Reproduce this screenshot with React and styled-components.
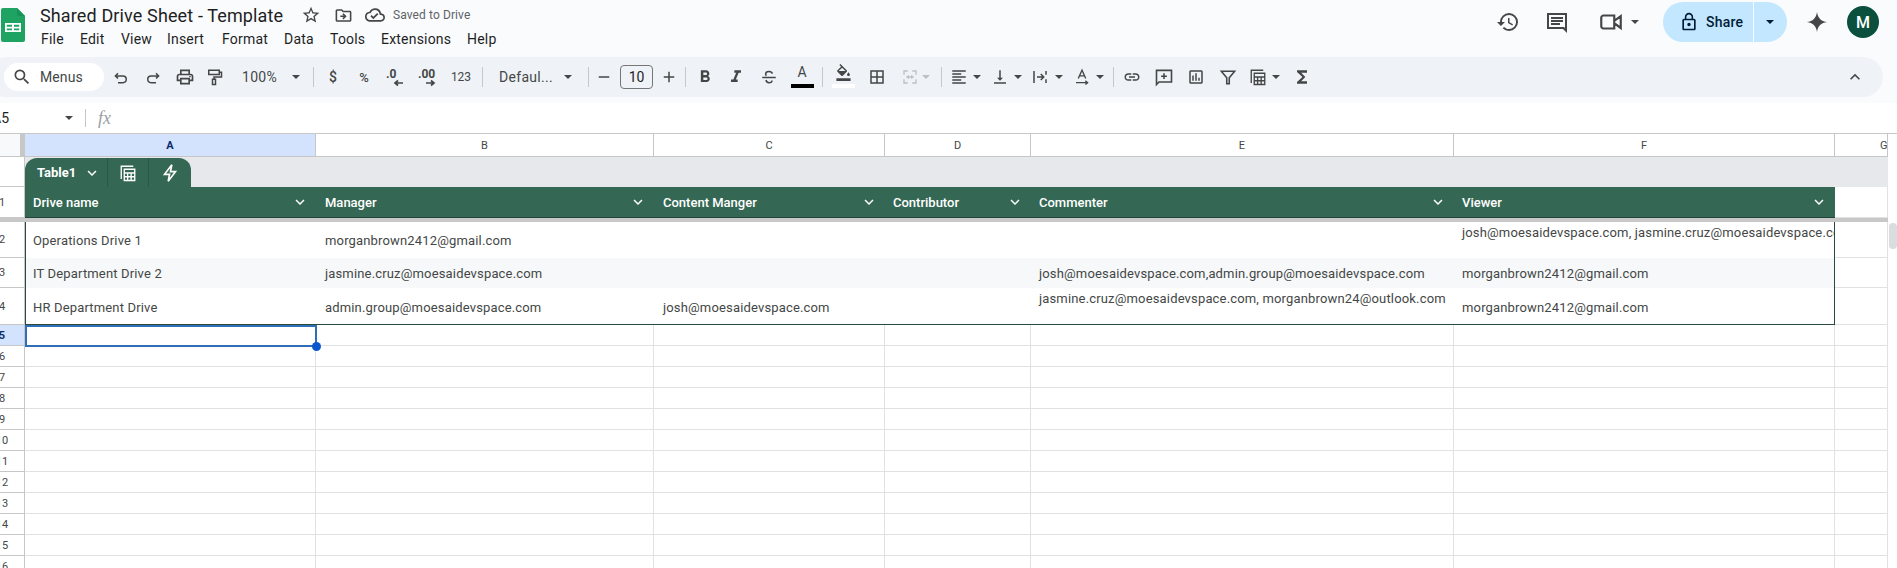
import React from "react";
import styled, { createGlobalStyle } from "styled-components";
import {
  MdOutlineStarBorder, MdOutlineDriveFileMove, MdOutlineCloudDone, MdHistory, MdLockOutline,
  MdSearch, MdOutlinePrint, MdFormatBold, MdFormatItalic,
  MdOutlineFormatColorFill, MdBorderAll, MdFormatAlignLeft,
  MdVerticalAlignBottom, MdLink, MdOutlineAssessment, MdFunctions,
  MdKeyboardArrowUp, MdKeyboardArrowDown, MdAdd, MdRemove,
} from "react-icons/md";

const ICON = "#444746";
const GREEN = "#356854";
const FONT = `Roboto, "Liberation Sans", sans-serif`;

const Global = createGlobalStyle`
  html, body { margin: 0; padding: 0; height: 568px; overflow: hidden; background: #f9fbfd; }
  body { font-family: ${FONT}; color: #1f1f1f; }
  #root { width: 1897px; height: 568px; overflow: hidden; }
  * { box-sizing: border-box; }
`;

const Page = styled.div`display: flex; flex-direction: column; width: 1897px; height: 568px; overflow: hidden;`;
const TopBar = styled.header`display: flex; align-items: flex-start; height: 57px; flex: none; padding-right: 18px;`;
const LogoWrap = styled.div`width: 40px; padding: 8px 0 0 1px; flex: none; display: flex;`;
const TitleCol = styled.div`display: flex; flex-direction: column;`;
const TitleRow = styled.div`display: flex; align-items: center; height: 26px; margin-top: 2px;`;
const Title = styled.div`font-size: 18px; width: 255px; color: #1f1f1f; white-space: nowrap; letter-spacing: 0.13px;`;
const Slot = styled.div`
  width: ${p => p.$w}px; flex: none; display: flex; align-items: center; justify-content: center;
  color: ${p => p.$c || ICON}; font-size: ${p => p.$s || 20}px;
`;
const Saved = styled.span`font-size: 12px; color: #5f6368; margin-left: 2px; white-space: nowrap; letter-spacing: 0.1px;`;
const MenuRow = styled.nav`display: flex; margin-top: 1px; padding-left: 1px;`;
const MenuItem = styled.span`font-size: 14px; line-height: 20px; width: ${p => p.$w}px; color: #1f1f1f; letter-spacing: 0.2px;`;
const RightTools = styled.div`margin-left: auto; display: flex; align-items: center; height: 44px;`;
const VideoBtn = styled.div`width: 64px; margin-right: 13px; padding-left: 12px; display: flex; align-items: center; gap: 7px; color: ${ICON};`;
const ShareLeft = styled.div`
  width: 90px; height: 40px; border-radius: 20px 0 0 20px; background: #c2e7ff; display: flex; align-items: center;
  padding-left: 16px; gap: 7px; color: #001d35; font-size: 14px; font-weight: 500; letter-spacing: 0.2px;
`;
const ShareRight = styled.div`
  width: 33px; height: 40px; margin-left: 1px; border-radius: 0 20px 20px 0; background: #c2e7ff;
  display: flex; align-items: center; padding-left: 12px;
`;
const Avatar = styled.div`
  width: 32px; height: 32px; border-radius: 50%; background: #0b4f3f; color: #fff; display: flex; align-items: center;
  justify-content: center; font-size: 16px; font-weight: 500;
`;
const Caret = styled.i`
  display: block; flex: none; width: 0; height: 0; border-left: 4px solid transparent; border-right: 4px solid transparent;
  border-top: 4px solid ${p => p.$c || ICON};
`;

const Toolbar = styled.div`
  display: flex; align-items: center; height: 40px; width: 1897px; margin-left: -14px; background: #eff3f8;
  border-radius: 20px; padding-left: 18px; flex: none;
`;
const SearchPill = styled.div`
  width: 100px; height: 28px; background: #fff; border-radius: 14px; display: flex; align-items: center; padding-left: 8px;
  gap: 8px; color: #444746; font-size: 14px; letter-spacing: 0.1px;
`;
const Tool = styled.div`
  flex: none; width: ${p => p.$w}px; height: 28px; display: flex; align-items: center; justify-content: center;
  color: ${ICON}; font-size: ${p => p.$s || 18}px;
`;
const CaretTool = styled.div`
  flex: none; width: ${p => p.$w}px; height: 28px; display: flex; align-items: center; gap: ${p => p.$g || 5}px;
  padding-left: ${p => p.$p}px; color: ${ICON}; font-size: 18px;
`;
const TextTool = styled.span`font-size: ${p => p.$s || 14}px; color: ${ICON}; ${p => p.$b ? "font-weight:500;" : ""}`;
const DropText = styled.span`font-size: 14px; color: ${ICON}; width: ${p => p.$w}px; letter-spacing: 0.3px; white-space: nowrap;`;
const Sep = styled.div`flex: none; width: 1px; height: 20px; background: #c7c7c7; margin-left: ${p => p.$l}px; margin-right: ${p => p.$r || 0}px;`;
const SizeBox = styled.div`
  flex: none; width: 33px; height: 24px; margin-left: 1px; border: 1px solid #747775; border-radius: 4px; display: flex; align-items: center;
  justify-content: center; font-size: 14px; color: #1f1f1f;
`;
const ColorTool = styled.div`flex: none; width: ${p => p.$w}px; height: 28px; display: flex; flex-direction: column; align-items: center; justify-content: flex-start; color: ${ICON};`;
const ColorGlyph = styled.div`height: 16px; margin-top: 1px; display: flex; align-items: center; justify-content: center; font-size: ${p => p.$s}px; line-height: 16px;`;
const Swatch = styled.div`width: 23px; height: 4px; margin-top: 4px; background: ${p => p.$c};`;
const Collapse = styled.div`margin-left: auto; margin-right: 12px; width: 32px; display: flex; justify-content: center; font-size: 20px; color: ${ICON};`;

const FormulaRow = styled.div`display: flex; align-items: center; height: 30px; margin-top: 6px; background: #fff; flex: none;`;
const NameBox = styled.div`width: 85px; display: flex; align-items: center; font-size: 14px; color: #1f1f1f; overflow: hidden;`;
const NameText = styled.span`margin-left: -8px; width: 73px;`;
const VLine = styled.div`width: 1px; height: 18px; background: #c7c7c7;`;
const Fx = styled.span`margin-left: 12px; font: italic 18px "Liberation Serif", serif; color: #9aa0a6;`;

const Sheet = styled.div`
  display: grid; flex: none; background: #fff; border-top: 1px solid #c7c7c7;
  grid-template-columns: 25px 291px 338px 231px 146px 423px 381px 53px 9px;
  grid-template-rows: 23px 30px 31px 4px 36px 30px 37px repeat(12, 21px);
`;
const Corner = styled.div`background: #f8f9fa; border-right: 5px solid #c7c7c7; border-bottom: 1px solid #c7c7c7;`;
const ColHead = styled.div`
  display: flex; align-items: center; justify-content: ${p => p.$clip ? "flex-start" : "center"}; overflow: hidden;
  padding-left: ${p => p.$clip ? 45 : 0}px;
  font-size: 11px; border-right: 1px solid #c7c7c7; border-bottom: 1px solid #c7c7c7;
  background: ${p => p.$on ? "#d3e3fd" : "#fff"}; color: ${p => p.$on ? "#0b2e6b" : "#444746"};
  font-weight: ${p => p.$on ? 700 : 400};
`;
const RowHead = styled.div`
  border-bottom: 1px solid #c7c7c7; border-right: 1px solid #c7c7c7; overflow: hidden; display: flex; align-items: center;
  font-size: 11px; background: ${p => p.$on ? "#d3e3fd" : "#fff"}; color: ${p => p.$on ? "#0b2e6b" : "#444746"};
  font-weight: ${p => p.$on ? 700 : 400};
`;
const RowNum = styled.span`display: block; width: 44px; margin-left: -20px; flex: none; text-align: center;`;
const TabStrip = styled.div`grid-column: 2 / span 7; background: #e6e8eb; display: flex; align-items: flex-end;`;
const Tab = styled.div`
  display: flex; align-items: stretch; height: 29px; width: 166px; background: ${GREEN}; border-radius: 12px 12px 0 0; color: #fff;
`;
const TabName = styled.div`
  width: 83px; display: flex; align-items: center; padding-left: 12px; gap: 7px; font-weight: 700; font-size: 13px;
  border-right: 1px solid #2b5745;
`;
const TabIcon = styled.div`
  width: ${p => p.$w}px; display: flex; align-items: center; justify-content: center;
  ${p => p.$line ? "border-right: 1px solid #2b5745;" : ""}
`;
const HeadCell = styled.div`
  background: ${GREEN}; color: #fff; font-size: 13px; font-weight: 500; display: flex; align-items: center; justify-content: space-between;
  padding: 0 7px 0 ${p => p.$pad}px; border-bottom: 1px solid #234638;
  svg { font-size: 18px; flex: none; }
`;
const BlankHead = styled.div`border-bottom: 1px solid #e1e1e1; border-right: 1px solid #e1e1e1;`;
const FreezeBar = styled.div`grid-column: 1 / span 8; background: #c8c8c8;`;
const Cell = styled.div`
  font-size: 13px; color: #444746; white-space: nowrap; overflow: hidden; display: flex; letter-spacing: 0.16px;
  align-items: ${p => p.$top ? "flex-start" : "center"};
  padding: ${p => p.$top ? 3 : p.$bottom ? 3 : 1}px 0 0 ${p => p.$pad}px;
  background: ${p => p.$alt ? "#f6f8f9" : "#fff"};
  ${p => p.$first ? "border-left: 1px solid #2a4a3e;" : ""}
  ${p => p.$last ? "border-right: 1px solid #2a4a3e;" : ""}
  ${p => p.$bottom ? "border-bottom: 1px solid #2a4a3e;" : ""}
`;
const Empty = styled.div`border-right: 1px solid #e1e1e1; border-bottom: 1px solid #e1e1e1; background: #fff;`;
const Selected = styled.div`position: relative; border: 2px solid #2e6fb7; margin: 0 -1px -1px 0; z-index: 1;`;
const Handle = styled.div`position: absolute; right: -6px; bottom: -6px; width: 9px; height: 9px; border-radius: 50%; background: #0b57d0;`;
const Track = styled.div`grid-column: 9; grid-row: 1 / -1; background: #fff; padding: 89px 0 0 1px;`;
const Thumb = styled.div`width: 8px; height: 26px; border-radius: 4px; background: #dadce0;`;

const Logo = () => (
  <svg width="24" height="34" viewBox="0 0 24 34">
    <path d="M2 0H16L24 8V32a2 2 0 0 1-2 2H2a2 2 0 0 1-2-2V2a2 2 0 0 1 2-2Z" fill="#1ea362" />
    <path d="M16 0L24 8H18a2 2 0 0 1-2-2Z" fill="#159556" />
    <path d="M4 15H20V24H4ZM5.8 16.8V18.7H11V16.8ZM13 16.8V18.7H18.2V16.8ZM5.8 20.4V22.2H11V20.4ZM13 20.4V22.2H18.2V20.4Z" fill="#fff" fillRule="evenodd" />
  </svg>
);
const Svg = ({ children, size = 18, sw = 2 }) => (
  <svg width={size} height={size} viewBox="0 0 24 24" fill="none" stroke="currentColor" strokeWidth={sw}>{children}</svg>
);
const Undo = () => <Svg sw={2}><path d="M8 7L4.5 10.5L8 14M5 10.5H14.5C17.5 10.5 19 12.5 19 15S17 19.5 14.5 19.5H8" /></Svg>;
const Redo = () => <Svg sw={2}><path d="M16 7L19.5 10.5L16 14M19 10.5H9.5C6.5 10.5 5 12.5 5 15S7 19.5 9.5 19.5H16" /></Svg>;
const Roller = () => <Svg sw={2}><path d="M5 3H19V8.5H5ZM19 5.7H22V12H12V15M10 15H14V22H10Z" /></Svg>;
const Strike = () => <Svg sw={2}><path d="M16.5 7.5C16 5.5 14.5 4.5 12 4.5S7.5 5.7 7.5 8C7.5 9 8 9.7 8.6 10.2M3 12.5H21M8 16C8.5 18.5 10 19.5 12 19.5S16 18.5 16 16.5" /></Svg>;
const Bolt = () => <Svg size={22} sw={1.8}><path d="M14 3L6 13.5H11.5L10 21L18 10.5H12.5Z" /></Svg>;
const Video = () => <Svg size={26} sw={2}><path d="M5 6H15V18H5C4 18 3 17 3 16V8C3 7 4 6 5 6ZM15 11L21 6.5V17.5L15 13Z" /></Svg>;
const AddComment = () => <Svg size={20} sw={1.9}><path d="M3 4H21V18H6L3 21ZM12 7.5V14.5M8.5 11H15.5" /></Svg>;
const CommentIcon = () => (
  <svg width="24" height="24" viewBox="0 0 24 24" fill="currentColor">
    <path fillRule="evenodd" d="M2 3H22V23L18 19H2ZM4 5V17H19L20 18V5ZM6 7H18V9H6ZM6 10H18V12H6ZM6 13H15V15H6Z" />
  </svg>
);
const Gemini = () => (
  <svg width="22" height="22" viewBox="0 0 24 24" fill="#444746">
    <path d="M12 1C12.8 7.5 16.5 11.2 23 12C16.5 12.8 12.8 16.5 12 23C11.2 16.5 7.5 12.8 1 12C7.5 11.2 11.2 7.5 12 1Z" />
  </svg>
);
const Merge = () => (
  <Svg sw={1.8}><path d="M4 9V4H9M15 4H20V9M4 15V20H9M15 20H20V15M7 12H11M9 10L11 12L9 14M17 12H13M15 10L13 12L15 14" /></Svg>
);
const Wrap = () => <Svg sw={2}><path d="M4 4V20M20 4V9M20 15V20M8 12H17M13 8L17 12L13 16" /></Svg>;
const RotateA = () => <Svg sw={1.8}><path d="M7 14L12 3L17 14M8.8 10.5H15.2M4 19.5H19M16.5 17L19.5 19.5L16.5 22" /></Svg>;
const TableCalc = ({ size = 18 }) => <Svg size={size} sw={1.8}><path d="M3 20V3H19M7 7H21V22H7ZM7 12H21M11.5 12V22M16.2 12V22M7 17H21" /></Svg>;
const FilterIcon = () => <Svg size={20} sw={1.9}><path d="M4 5H20L13.5 13V20H10.5V13Z" /></Svg>;
const DecDown = () => (
  <svg width="24" height="20" viewBox="0 0 24 20" fill="none" stroke="currentColor">
    <text x="3" y="11" fontSize="12" fontWeight="700" fill="currentColor" stroke="none" fontFamily="Roboto">.0</text>
    <path d="M20 16H12M15 13.5L12 16L15 18.5" strokeWidth="1.7" />
  </svg>
);
const DecUp = () => (
  <svg width="28" height="20" viewBox="0 0 28 20" fill="none" stroke="currentColor">
    <text x="3" y="11" fontSize="12" fontWeight="700" fill="currentColor" stroke="none" fontFamily="Roboto">.00</text>
    <path d="M11 16H19M16 13.5L19 16L16 18.5" strokeWidth="1.7" />
  </svg>
);

const MENU = [["File", 39], ["Edit", 41], ["View", 46], ["Insert", 55], ["Format", 62], ["Data", 46], ["Tools", 51], ["Extensions", 86], ["Help", 40]];
const COLS = [["A", 1], ["B"], ["C"], ["D"], ["E"], ["F"]];
const HEADS = ["Drive name", "Manager", "Content Manger", "Contributor", "Commenter", "Viewer"];
const PADS = [8, 9, 9, 8, 8, 8];
const ROWS = [
  { n: 2, c: ["Operations Drive 1", "morganbrown2412@gmail.com", "", "", "", "josh@moesaidevspace.com, jasmine.cruz@moesaidevspace.com"], top: [5] },
  { n: 3, alt: true, c: ["IT Department Drive 2", "jasmine.cruz@moesaidevspace.com", "", "", "josh@moesaidevspace.com,admin.group@moesaidevspace.com", "morganbrown2412@gmail.com"], top: [] },
  { n: 4, bottom: true, c: ["HR Department Drive", "admin.group@moesaidevspace.com", "josh@moesaidevspace.com", "", "jasmine.cruz@moesaidevspace.com, morganbrown24@outlook.com", "morganbrown2412@gmail.com"], top: [4] },
];
const EMPTY_ROWS = [6, 7, 8, 9, 10, 11, 12, 13, 14, 15, 16];

export default function App() {
  return (
    <Page>
      <Global />
      <TopBar>
        <LogoWrap><Logo /></LogoWrap>
        <TitleCol>
          <TitleRow>
            <Title>Shared Drive Sheet - Template</Title>
            <Slot $w={32} $s={20}><MdOutlineStarBorder /></Slot>
            <Slot $w={32} $s={19}><MdOutlineDriveFileMove /></Slot>
            <Slot $w={32} $s={20}><MdOutlineCloudDone /></Slot>
            <Saved>Saved to Drive</Saved>
          </TitleRow>
          <MenuRow>
            {MENU.map(([m, w]) => <MenuItem key={m} $w={w}>{m}</MenuItem>)}
          </MenuRow>
        </TitleCol>
        <RightTools>
          <Slot $w={40} $s={24}><MdHistory /></Slot>
          <Slot $w={58}><CommentIcon /></Slot>
          <VideoBtn><Video /><Caret /></VideoBtn>
          <ShareLeft><MdLockOutline size={20} />Share</ShareLeft>
          <ShareRight><Caret $c="#001d35" /></ShareRight>
          <Slot $w={60}><Gemini /></Slot>
          <Avatar>M</Avatar>
        </RightTools>
      </TopBar>

      <Toolbar>
        <SearchPill><MdSearch size={20} />Menus</SearchPill>
        <Tool $w={33}><Undo /></Tool>
        <Tool $w={32}><Redo /></Tool>
        <Tool $w={32} $s={20}><MdOutlinePrint /></Tool>
        <Tool $w={26}><Roller /></Tool>
        <CaretTool $w={83} $p={15} $g={13}><DropText $w={37}>100%</DropText><Caret /></CaretTool>
        <Sep $l={3} $r={3} />
        <Tool $w={32}><TextTool $b>$</TextTool></Tool>
        <Tool $w={30}><TextTool $s={13} $b>%</TextTool></Tool>
        <Tool $w={32}><DecDown /></Tool>
        <Tool $w={36}><DecUp /></Tool>
        <Tool $w={28}><TextTool $s={12}>123</TextTool></Tool>
        <Sep $l={7} />
        <CaretTool $w={95} $p={16} $g={13}><DropText $w={52}>Defaul...</DropText><Caret /></CaretTool>
        <Sep $l={10} />
        <Tool $w={30}><MdRemove /></Tool>
        <SizeBox>10</SizeBox>
        <Tool $w={32}><MdAdd /></Tool>
        <Sep $l={0} />
        <Tool $w={38} $s={20}><MdFormatBold /></Tool>
        <Tool $w={24} $s={20}><MdFormatItalic /></Tool>
        <Tool $w={41}><Strike /></Tool>
        <ColorTool $w={26}><ColorGlyph $s={14}>A</ColorGlyph><Swatch $c="#000" /></ColorTool>
        <Sep $l={7} />
        <ColorTool $w={40}><ColorGlyph $s={17}><MdOutlineFormatColorFill /></ColorGlyph><Swatch $c="#fff" /></ColorTool>
        <Tool $w={28}><MdBorderAll /></Tool>
        <CaretTool $w={46} $p={10} $g={3}><Slot $w={18} $c="#bdc1c6"><Merge /></Slot><Caret $c="#bdc1c6" /></CaretTool>
        <Sep $l={4} />
        <CaretTool $w={43} $p={8}><MdFormatAlignLeft /><Caret /></CaretTool>
        <CaretTool $w={39} $p={6}><MdVerticalAlignBottom /><Caret /></CaretTool>
        <CaretTool $w={43} $p={7} $g={6}><Wrap /><Caret /></CaretTool>
        <CaretTool $w={40} $p={6}><RotateA /><Caret /></CaretTool>
        <Sep $l={6} />
        <Tool $w={36}><MdLink /></Tool>
        <Tool $w={28}><AddComment /></Tool>
        <Tool $w={36}><MdOutlineAssessment /></Tool>
        <Tool $w={28}><FilterIcon /></Tool>
        <CaretTool $w={39} $p={7}><TableCalc /><Caret /></CaretTool>
        <Tool $w={42} $s={20}><MdFunctions /></Tool>
        <Collapse><MdKeyboardArrowUp /></Collapse>
      </Toolbar>

      <FormulaRow>
        <NameBox><NameText>A5</NameText><Caret /></NameBox>
        <VLine />
        <Fx>fx</Fx>
      </FormulaRow>

      <Sheet>
        <Corner />
        {COLS.map(([c, on]) => <ColHead key={c} $on={on}>{c}</ColHead>)}
        <ColHead $clip>G</ColHead>

        <RowHead />
        <TabStrip>
          <Tab>
            <TabName>Table1 <MdKeyboardArrowDown size={18} /></TabName>
            <TabIcon $w={41} $line><TableCalc size={18} /></TabIcon>
            <TabIcon $w={41}><Bolt /></TabIcon>
          </Tab>
        </TabStrip>

        <RowHead><RowNum>1</RowNum></RowHead>
        {HEADS.map((h, i) => <HeadCell key={h} $pad={PADS[i]}>{h}<MdKeyboardArrowDown /></HeadCell>)}
        <BlankHead />

        <FreezeBar />

        {ROWS.map(r => (
          <React.Fragment key={r.n}>
            <RowHead><RowNum>{r.n}</RowNum></RowHead>
            {r.c.map((t, i) => (
              <Cell key={i} $alt={r.alt} $first={i === 0} $last={i === 5} $bottom={r.bottom} $top={r.top.includes(i)} $pad={i === 0 ? 7 : PADS[i]}>{t}</Cell>
            ))}
            <Empty />
          </React.Fragment>
        ))}

        <RowHead $on><RowNum>5</RowNum></RowHead>
        <Selected><Handle /></Selected>
        {[0, 1, 2, 3, 4, 5].map(i => <Empty key={i} />)}

        {EMPTY_ROWS.map(n => (
          <React.Fragment key={n}>
            <RowHead><RowNum>{n}</RowNum></RowHead>
            {[0, 1, 2, 3, 4, 5, 6].map(i => <Empty key={i} />)}
          </React.Fragment>
        ))}
        <Track><Thumb /></Track>
      </Sheet>
    </Page>
  );
}
